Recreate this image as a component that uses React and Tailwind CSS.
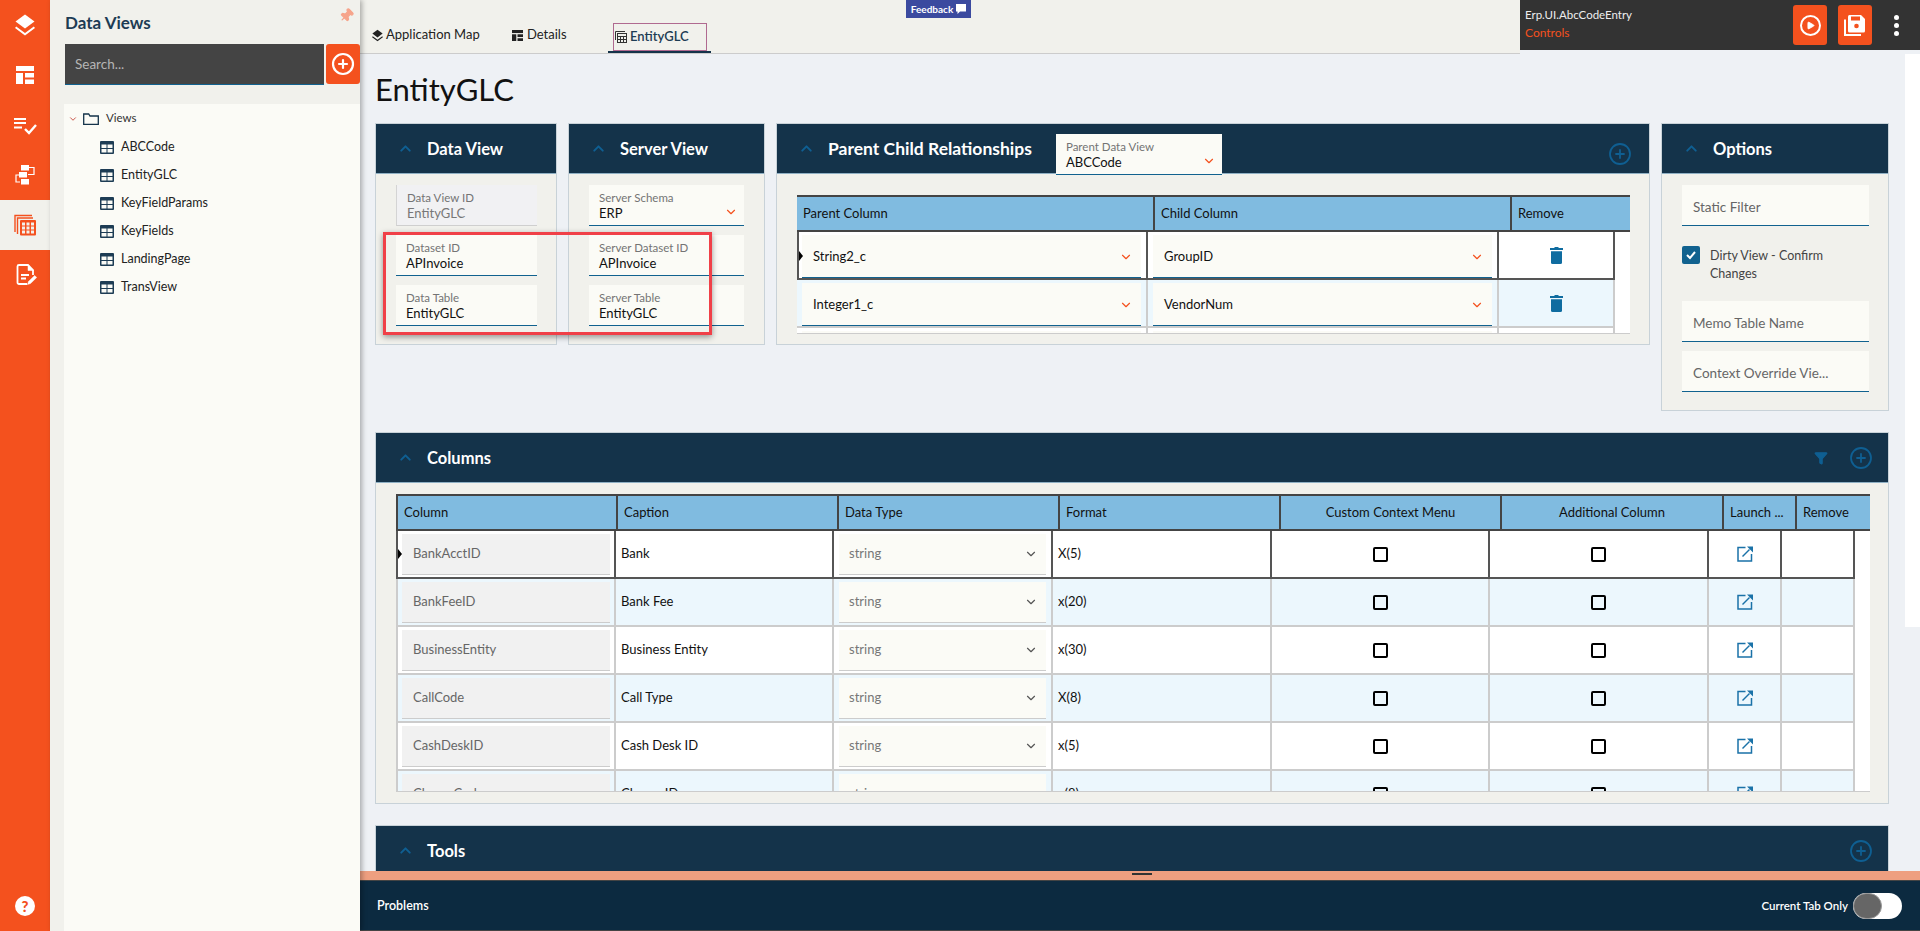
import { ChevronDown, ChevronUp, CirclePlus, Filter, Pin, Play } from 'lucide-react';

const views = ['ABCCode', 'EntityGLC', 'KeyFieldParams', 'KeyFields', 'LandingPage', 'TransView'];

const rows = [
  ['BankAcctID', 'Bank', 'X(5)'],
  ['BankFeeID', 'Bank Fee', 'x(20)'],
  ['BusinessEntity', 'Business Entity', 'x(30)'],
  ['CallCode', 'Call Type', 'X(8)'],
  ['CashDeskID', 'Cash Desk ID', 'x(5)'],
  ['ChargeCode', 'Charge ID', 'x(8)'],
];

function LayersIcon({ className }) {
  return (
    <svg viewBox="0 0 24 24" className={className} fill="currentColor">
      <path d="M12 1.500 21.500 8.500 12 15.500 2.500 8.500z" />
      <path d="M3.200 13.500 12 20 20.800 13.500l1.200 1.600L12 22.500 2 15.100z" />
    </svg>
  );
}

function LayoutIcon({ className }) {
  return (
    <svg viewBox="0 0 18 18" className={className} fill="currentColor">
      <rect x="0" y="0" width="18" height="5" />
      <rect x="0" y="7" width="7" height="11" />
      <rect x="9" y="7" width="9" height="4.500" />
      <rect x="9" y="13.500" width="9" height="4.500" />
    </svg>
  );
}

function ChecklistIcon() {
  return (
    <svg viewBox="0 0 24 24" className="w-[24px] h-[24px]" fill="none" stroke="currentColor" strokeWidth="2">
      <path d="M1 6h12M1 10h12M1 14.500h8" />
      <path d="m12 16 4 4 7-8" strokeWidth="2.400" />
    </svg>
  );
}

function FlowIcon() {
  return (
    <svg viewBox="0 0 24 24" className="w-[24px] h-[24px]" fill="none">
      <rect x="8" y="2" width="8" height="5.500" fill="currentColor" />
      <rect x="6" y="9" width="8" height="5.500" fill="currentColor" />
      <rect x="8" y="16" width="8" height="5.500" fill="currentColor" />
      <path d="M16 4.500h5v7h-6M8 12H3v7h4" stroke="currentColor" strokeWidth="1.200" />
    </svg>
  );
}

function GridStackIcon() {
  return (
    <svg viewBox="0 0 24 24" className="w-[24px] h-[24px]" fill="none">
      <path d="M2 19V2.500h17" stroke="#f4511e" strokeWidth="1.400" />
      <path d="M4.500 21V5H20" stroke="#f4511e" strokeWidth="1.400" />
      <rect x="7" y="7" width="16" height="15.500" rx="1" fill="#f4511e" />
      <path d="M9 9.500h3v3H9zM13.500 9.500h3v3h-3zM18 9.500h3v3h-3zM9 13.500h3v3H9zM13.500 13.500h3v3h-3zM18 13.500h3v3h-3zM9 17.500h3v3H9zM13.500 17.500h3v3h-3zM18 17.500h3v3h-3z" fill="#f1f1ec" />
    </svg>
  );
}

function NoteEditIcon() {
  return (
    <svg viewBox="0 0 24 24" className="w-[24px] h-[24px]" fill="none" stroke="currentColor">
      <path d="M14 21H6a1.500 1.500 0 0 1-1.500-1.500v-16A1.500 1.500 0 0 1 6 2h9l5 5v5" strokeWidth="1.800" />
      <path d="M15 2v5.500h5.500z" fill="currentColor" strokeWidth="0.500" />
      <path d="M8 12h8M8 15.500h5" strokeWidth="1.800" />
      <path d="m14.500 21.500 1-3 6.200-6 2 2-6.200 6z" fill="currentColor" strokeWidth="0.500" />
    </svg>
  );
}

function FolderIcon() {
  return (
    <svg viewBox="0 0 16 12" className="w-[16px] h-[12px]" fill="none" stroke="#14334a" strokeWidth="1.300">
      <path d="M.7 11.300V1h5l1.300 2h8.300v8.300z" />
    </svg>
  );
}

function ViewIcon() {
  return (
    <svg viewBox="0 0 14 13" className="w-[14px] h-[13px]">
      <rect width="14" height="13" rx="1" fill="#1d3c54" />
      <path d="M1.500 3.500h5v3.500h-5zM7.500 3.500h5v3.500h-5zM1.500 8h5v3.500h-5zM7.500 8h5v3.500h-5z" fill="#fbfbf6" />
    </svg>
  );
}

function SaveIcon() {
  return (
    <svg viewBox="0 0 24 24" className="w-[24px] h-[24px]" fill="none">
      <path d="M2 6.500V22h16" stroke="white" strokeWidth="2" />
      <path d="M5 3.500A1.500 1.500 0 0 1 6.500 2H18l4 4v12a1.500 1.500 0 0 1-1.500 1.500h-14A1.500 1.500 0 0 1 5 18z" fill="white" />
      <rect x="8" y="3.500" width="9" height="4" fill="#f4511e" />
      <circle cx="13.500" cy="13" r="2.300" fill="#f4511e" />
    </svg>
  );
}

function LaunchIcon() {
  return (
    <svg viewBox="0 0 16 16" className="w-[16px] h-[16px]" fill="none" stroke="#1a72a8" strokeWidth="1.500">
      <path d="M8.500 1.500H1v13.500h13.500V8" />
      <path d="m5.500 10.500 7-7" />
      <path d="M10 .5H16v6z" fill="#1a72a8" stroke="none" />
    </svg>
  );
}

function TrashIcon() {
  return (
    <svg viewBox="0 0 13 17" className="w-[13px] h-[17px]" fill="#0f6ca0">
      <path d="M4.500 0h4v1H13v2H0V1h4.500z" />
      <path d="M1 4.200h11V15.500a1.500 1.500 0 0 1-1.500 1.500h-8A1.500 1.500 0 0 1 1 15.500z" />
    </svg>
  );
}

function RailButton({ active, children }) {
  return (
    <div className={active ? 'h-[50px] flex items-center justify-center bg-[#f1f1ec]' : 'h-[50px] flex items-center justify-center text-white'}>
      {children}
    </div>
  );
}

function Field({ label, value, disabled, select, className = '' }) {
  return (
    <div className={`h-[41px] relative pt-[5px] border-b-[1.500px] ${disabled ? 'bg-[#f1f1f3] border-[#cfcfcf] border-l-[1.500px] border-l-[#d4d4d4] pl-[10px]' : 'bg-[#fbfbf6] border-[#11628f] pl-[10px]'} ${className}`}>
      <div className="text-[11.500px] leading-[15px] text-[#747474]">{label}</div>
      <div className={`text-[13px] leading-[17px] ${disabled ? 'text-[#777]' : 'text-[#111]'}`}>{value}</div>
      {select && <ChevronDown size={14} strokeWidth={2} className="absolute right-[6px] top-[20px] text-[#f4511e]" />}
    </div>
  );
}

function PlaceholderField({ label, className = '' }) {
  return (
    <div className={`h-[41px] flex items-center pl-[11px] pt-[4px] bg-[#fbfbf6] border-b-[1.500px] border-[#11628f] text-[13.500px] text-[#666] ${className}`}>
      {label}
    </div>
  );
}

function CardHeader({ title, size = 'text-[16.500px]', gap = 'ml-[13px]', children }) {
  return (
    <div className="h-[50px] flex items-center bg-[#14334a] border-b border-[#8fb0c4] shrink-0">
      <ChevronUp size={17} strokeWidth={2.800} className="text-[#0f5f92] ml-[21px]" />
      <span className={`${gap} pt-[2px] font-bold text-white ${size}`}>{title}</span>
      {children}
    </div>
  );
}

function Card({ className = '', children }) {
  return <div className={`bg-[#f1f1ec] border border-[#c8d2d8] flex flex-col shrink-0 ${className}`}>{children}</div>;
}

function HeadCell({ width, children, center }) {
  return (
    <div className={`${width} h-full shrink-0 flex items-center px-[6px] border-r-2 border-[#444] text-[13px] text-[#111] ${center ? 'justify-center' : ''}`}>
      {children}
    </div>
  );
}

function RelSelect({ value }) {
  return (
    <div className="h-[43px] mx-[5px] mt-[3px] flex items-center justify-between pl-[11px] pr-[8px] pt-[2px] bg-[#fbfbf6] border-b-[1.500px] border-[#11628f] text-[13px] text-[#111]">
      {value}
      <ChevronDown size={14} strokeWidth={2} className="text-[#f4511e]" />
    </div>
  );
}

function RelRow({ first, alt, parent, child, cut }) {
  const line = first ? 'border-[#555]' : 'border-[#ccc]';
  return (
    <div className={`flex h-[48px] shrink-0 border-b-2 ${line} ${alt ? 'bg-[#ecf7fd]' : 'bg-white'} w-[818px] ${first ? 'border-l-2 border-l-[#555]' : ''} relative`}>
      {first && <div className="absolute left-0 top-[19px] w-0 h-0 border-y-[5px] border-y-transparent border-l-[4px] border-l-black" />}
      <div className={`w-[351px] shrink-0 border-r-2 ${line} ${first ? '-ml-[2px]' : ''}`}>{!cut && <RelSelect value={parent} />}{cut && <div className="h-full mx-[5px] mt-[3px] bg-[#fbfbf6]" />}</div>
      <div className={`w-[351px] shrink-0 border-r-2 ${line}`}>{!cut && <RelSelect value={child} />}{cut && <div className="h-full mx-[5px] mt-[3px] bg-[#fbfbf6]" />}</div>
      <div className={`w-[116px] shrink-0 border-r-2 ${line} flex items-center justify-center`}>
        {!cut && <TrashIcon />}
      </div>
    </div>
  );
}

function ColumnRow({ row, index }) {
  const first = index === 0;
  const line = first ? 'border-[#555]' : 'border-[#ccc]';
  const cell = `border-r-2 ${line} shrink-0 h-full flex items-center`;
  return (
    <div className={`relative flex h-[48px] shrink-0 w-[1459px] border-b-2 ${line} ${index % 2 ? 'bg-[#ecf7fd]' : 'bg-white'} ${first ? 'border-l-2 border-l-[#555]' : 'border-l-2 border-l-[#ccc]'}`}>
      {first && <div className="absolute left-0 top-[18px] w-0 h-0 border-y-[5px] border-y-transparent border-l-[4px] border-l-black" />}
      <div className={`${cell} w-[218px] px-[4px]`}>
        <div className="w-full h-[41px] flex items-center pl-[11px] bg-[#f1f1f1] border-b-[1.500px] border-[#ccc] text-[13px] text-[#666]">{row[0]}</div>
      </div>
      <div className={`${cell} w-[218px] pl-[5px] text-[13px] text-[#111]`}>{row[1]}</div>
      <div className={`${cell} w-[219px] px-[5px]`}>
        <div className="w-full h-[41px] flex items-center justify-between pl-[10px] pr-[8px] bg-[#fbfbf6] border-b-[1.500px] border-[#ccc] text-[13px] text-[#777]">
          string
          <ChevronDown size={14} strokeWidth={2} className="text-[#555]" />
        </div>
      </div>
      <div className={`${cell} w-[219px] pl-[5px] text-[13px] text-[#111]`}>{row[2]}</div>
      <div className={`${cell} w-[218px] justify-center`}><span className="block w-[15px] h-[15px] rounded-[2px] border-2 border-black" /></div>
      <div className={`${cell} w-[219px] justify-center`}><span className="block w-[15px] h-[15px] rounded-[2px] border-2 border-black" /></div>
      <div className={`${cell} w-[73px] justify-center`}><LaunchIcon /></div>
      <div className={`${cell} w-[73px]`} />
    </div>
  );
}

export default function App() {
  return (
    <div className="relative w-[1920px] h-[931px] overflow-hidden flex bg-[#eef1f5] font-[Lato,sans-serif]">
      {/* left rail */}
      <div className="w-[50px] shrink-0 bg-[#f4511e] flex flex-col">
        <RailButton><LayersIcon className="w-[24px] h-[24px]" /></RailButton>
        <RailButton><LayoutIcon className="w-[18px] h-[18px]" /></RailButton>
        <RailButton><ChecklistIcon /></RailButton>
        <RailButton><FlowIcon /></RailButton>
        <RailButton active><GridStackIcon /></RailButton>
        <RailButton><NoteEditIcon /></RailButton>
        <div className="mt-auto mb-[15px] mx-auto w-[20px] h-[20px] rounded-full bg-white flex items-center justify-center text-[#f4511e] text-[15px] font-black leading-none">?</div>
      </div>

      {/* data views panel */}
      <div className="relative z-10 w-[310px] shrink-0 bg-[#f1f1ec] flex flex-col shadow-[2px_0_5px_rgba(0,0,0,0.3)]">
        <div className="h-[44px] pl-[15px] pt-[10px] text-[17px] font-bold text-[#1d3c54] relative">
          Data Views
          <Pin size={15} strokeWidth={2} className="absolute right-[6px] top-[8px] rotate-45 text-[#f6a48b] fill-[#f6a48b]" />
        </div>
        <div className="flex pl-[15px] gap-[2px]">
          <div className="w-[259px] h-[41px] bg-[#444] border-b border-[#11628f] flex items-center pl-[10px] text-[13.500px] text-[#b5b5b5]">Search...</div>
          <div className="w-[34px] h-[40px] rounded-[3px] bg-[#f4511e] flex items-center justify-center text-white">
            <CirclePlus size={24} strokeWidth={2.200} />
          </div>
        </div>
        <div className="flex-1 mt-[19px] ml-[14px] bg-[#fbfbf6] pt-[8px] text-[12.500px] text-[#222]">
          <div className="h-[14px] flex items-center">
            <ChevronDown size={10} strokeWidth={2} className="ml-[4px] text-[#c0392b]" />
            <span className="ml-[5px]"><FolderIcon /></span>
            <span className="ml-[7px] text-[#333] text-[11.500px] -mt-[2px]">Views</span>
          </div>
          <div className="mt-[7px]">
            {views.map((v) => (
              <div key={v} className="h-[28px] flex items-center pl-[36px] gap-[7px]">
                <ViewIcon />
                {v}
              </div>
            ))}
          </div>
        </div>
      </div>

      {/* main */}
      <div className="flex-1 min-w-0 flex flex-col relative">
        <div className="h-[54px] shrink-0 flex">
          <div className="flex-1 bg-[#f1f1ec] border-b border-[#ccc] flex items-end pl-[11px] text-[13px] text-[#222] relative">
            <div className="h-[33px] flex items-center gap-[2px] w-[141px] pb-[3px]"><LayersIcon className="w-[13px] h-[13px] text-[#222]" />Application Map</div>
            <div className="h-[33px] flex items-center gap-[4px] w-[96px] pb-[3px]"><LayoutIcon className="w-[11px] h-[11px] text-[#222]" />Details</div>
            <div className="h-[33px] w-[103px] border-b-2 border-[#14334a] pl-[5px] pt-[3px]">
              <div className="h-[28px] w-[94px] border border-[#b06a90] flex items-center gap-[3px] pl-[1px] text-[#1d3c54] font-semibold">
                <svg viewBox="0 0 12 12" className="w-[12px] h-[12px]" fill="none" stroke="#333"><path d="M.5 9V.5H10" /><rect x="2.500" y="2.500" width="9" height="9" /><path d="M2.500 5.500h9M2.500 8.500h9M5.500 5.500v6M8.500 5.500v6" /></svg>
                EntityGLC
              </div>
            </div>
            <div className="absolute left-[546px] top-0 w-[65px] h-[18px] bg-[#3b4a9f] text-white text-[10px] font-bold flex items-center justify-center gap-[3px]">
              Feedback
              <svg viewBox="0 0 10 10" className="w-[10px] h-[10px]" fill="white"><path d="M0 0h10v7.500H4L1.500 10V7.500H0z" /></svg>
            </div>
          </div>
          <div className="w-[400px] h-[50px] bg-[#333] flex items-center pl-[5px]">
            <div className="w-[268px] -mt-[2px]">
              <div className="text-[11.500px] leading-[18px] text-[#eee]">Erp.UI.AbcCodeEntry</div>
              <div className="text-[12px] leading-[18px] text-[#f4511e]">Controls</div>
            </div>
            <div className="w-[34px] h-[40px] rounded-[3px] bg-[#f4511e] flex items-center justify-center">
              <span className="w-[21px] h-[21px] rounded-full border-[2.500px] border-white flex items-center justify-center">
                <Play size={9} className="text-white fill-white ml-[1px]" />
              </span>
            </div>
            <div className="w-[34px] h-[40px] ml-[11px] rounded-[3px] bg-[#f4511e] flex items-center justify-center"><SaveIcon /></div>
            <div className="ml-[22px] flex flex-col gap-[3px]">
              <span className="w-[5px] h-[5px] rounded-full bg-white" />
              <span className="w-[5px] h-[5px] rounded-full bg-white" />
              <span className="w-[5px] h-[5px] rounded-full bg-white" />
            </div>
          </div>
        </div>

        <div className="flex-1 min-h-0 flex">
          <div className="flex-1 min-w-0 overflow-hidden pl-[15px] pr-[16px]">
            <div className="h-[69px] flex items-center text-[31px] text-[#111] pt-[1px]">EntityGLC</div>
            <div className="flex items-start">
              <Card className="w-[182px] h-[222px]">
                <CardHeader title="Data View" />
                <div className="flex flex-col gap-[9px] pl-[20px] pr-[19px] pt-[11px]">
                  <Field label="Data View ID" value="EntityGLC" disabled />
                  <Field label="Dataset ID" value="APInvoice" />
                  <Field label="Data Table" value="EntityGLC" />
                </div>
              </Card>
              <Card className="w-[197px] h-[222px] ml-[11px]">
                <CardHeader title="Server View" />
                <div className="flex flex-col gap-[9px] px-[20px] pt-[11px]">
                  <Field label="Server Schema" value="ERP" select />
                  <Field label="Server Dataset ID" value="APInvoice" />
                  <Field label="Server Table" value="EntityGLC" />
                </div>
              </Card>
              <Card className="w-[874px] h-[222px] ml-[11px]">
                <CardHeader title="Parent Child Relationships" size="text-[17.500px]">
                  <Field label="Parent Data View" value="ABCCode" select className="w-[166px] ml-[24px] mt-[11px]" />
                  <CirclePlus size={24} strokeWidth={1.800} className="ml-auto mr-[17px] mt-[11px] text-[#0f5f92]" />
                </CardHeader>
                <div className="mx-[20px] mt-[21px] w-[833px] h-[139px] overflow-hidden bg-white border-b border-[#ccc]">
                  <div className="flex h-[37px] bg-[#80bbe0] border-y-2 border-[#444]">
                    <HeadCell width="w-[358px]">Parent Column</HeadCell>
                    <HeadCell width="w-[357px]">Child Column</HeadCell>
                    <div className="flex items-center pl-[6px] text-[13px] text-[#111]">Remove</div>
                  </div>
                  <div className="flex flex-col">
                    <RelRow first parent="String2_c" child="GroupID" />
                    <RelRow alt parent="Integer1_c" child="VendorNum" />
                    <RelRow cut />
                  </div>
                </div>
              </Card>
              <Card className="w-[228px] h-[288px] ml-[11px]">
                <CardHeader title="Options" />
                <div className="pl-[20px] pr-[19px] pt-[11px]">
                  <PlaceholderField label="Static Filter" />
                  <div className="flex mt-[20px] h-[36px]">
                    <span className="w-[18px] h-[18px] rounded-[2px] bg-[#11628f] flex items-center justify-center shrink-0">
                      <svg viewBox="0 0 12 12" className="w-[12px] h-[12px]" fill="none" stroke="white" strokeWidth="2"><path d="m2 6 3 3 5-6" /></svg>
                    </span>
                    <span className="ml-[10px] pt-[1px] text-[12.500px] leading-[18px] text-[#444]">Dirty View - Confirm<br />Changes</span>
                  </div>
                  <PlaceholderField label="Memo Table Name" className="mt-[19px]" />
                  <PlaceholderField label="Context Override Vie..." className="mt-[9px]" />
                </div>
              </Card>
            </div>

            <Card className="mt-[21px] w-[1514px] h-[372px]">
              <CardHeader title="Columns">
                <Filter size={14} className="ml-auto text-[#0f5f92] fill-[#0f5f92]" />
                <CirclePlus size={24} strokeWidth={1.800} className="ml-[21px] mr-[15px] text-[#0f5f92]" />
              </CardHeader>
              <div className="mx-[20px] mt-[11px] w-[1474px] flex-1 min-h-0 mb-[11px] overflow-hidden bg-white border-b border-[#ccc] flex flex-col">
                <div className="flex h-[37px] shrink-0 bg-[#80bbe0] border-y-2 border-l-2 border-[#444]">
                  <HeadCell width="w-[220px]">Column</HeadCell>
                  <HeadCell width="w-[221px]">Caption</HeadCell>
                  <HeadCell width="w-[221px]">Data Type</HeadCell>
                  <HeadCell width="w-[221px]">Format</HeadCell>
                  <HeadCell width="w-[221px]" center>Custom Context Menu</HeadCell>
                  <HeadCell width="w-[222px]" center>Additional Column</HeadCell>
                  <HeadCell width="w-[73px]"><span className="whitespace-nowrap">Launch ...</span></HeadCell>
                  <div className="flex items-center pl-[6px] text-[13px] text-[#111]">Remove</div>
                </div>
                <div className="flex flex-col">
                  {rows.map((r, i) => <ColumnRow key={r[0]} row={r} index={i} />)}
                </div>
              </div>
            </Card>

            <Card className="mt-[21px] w-[1514px]">
              <CardHeader title="Tools">
                <CirclePlus size={24} strokeWidth={1.800} className="ml-auto mr-[15px] text-[#0f5f92]" />
              </CardHeader>
            </Card>
          </div>
          <div className="w-[15px] shrink-0"><div className="h-[573px] bg-white" /></div>
        </div>

        {/* problems bar */}
        <div className="relative h-[9px] shrink-0 bg-[#ee9f80]">
          <div className="absolute left-[772px] top-[2px] w-[20px] h-[2px] bg-[#333]" />
        </div>
        <div className="h-[51px] shrink-0 bg-[#0c2a40] border-y border-[#444] flex items-center px-[17px] text-white">
          <span className="text-[12.500px] font-semibold pt-[2px]">Problems</span>
          <span className="ml-auto text-[11.500px] font-semibold mr-[5px]">Current Tab Only</span>
          <div className="w-[49px] h-[26px] rounded-full bg-white mr-[1px]">
            <div className="w-[29px] h-[26px] rounded-full bg-[#666] border border-[#999]" />
          </div>
        </div>

        {/* red annotation box */}
        <div className="absolute left-[23px] top-[232px] w-[329px] h-[103px] border-[3px] border-[#f04048] shadow-[0_2px_6px_rgba(0,0,0,0.4)]" />
      </div>
    </div>
  );
}
